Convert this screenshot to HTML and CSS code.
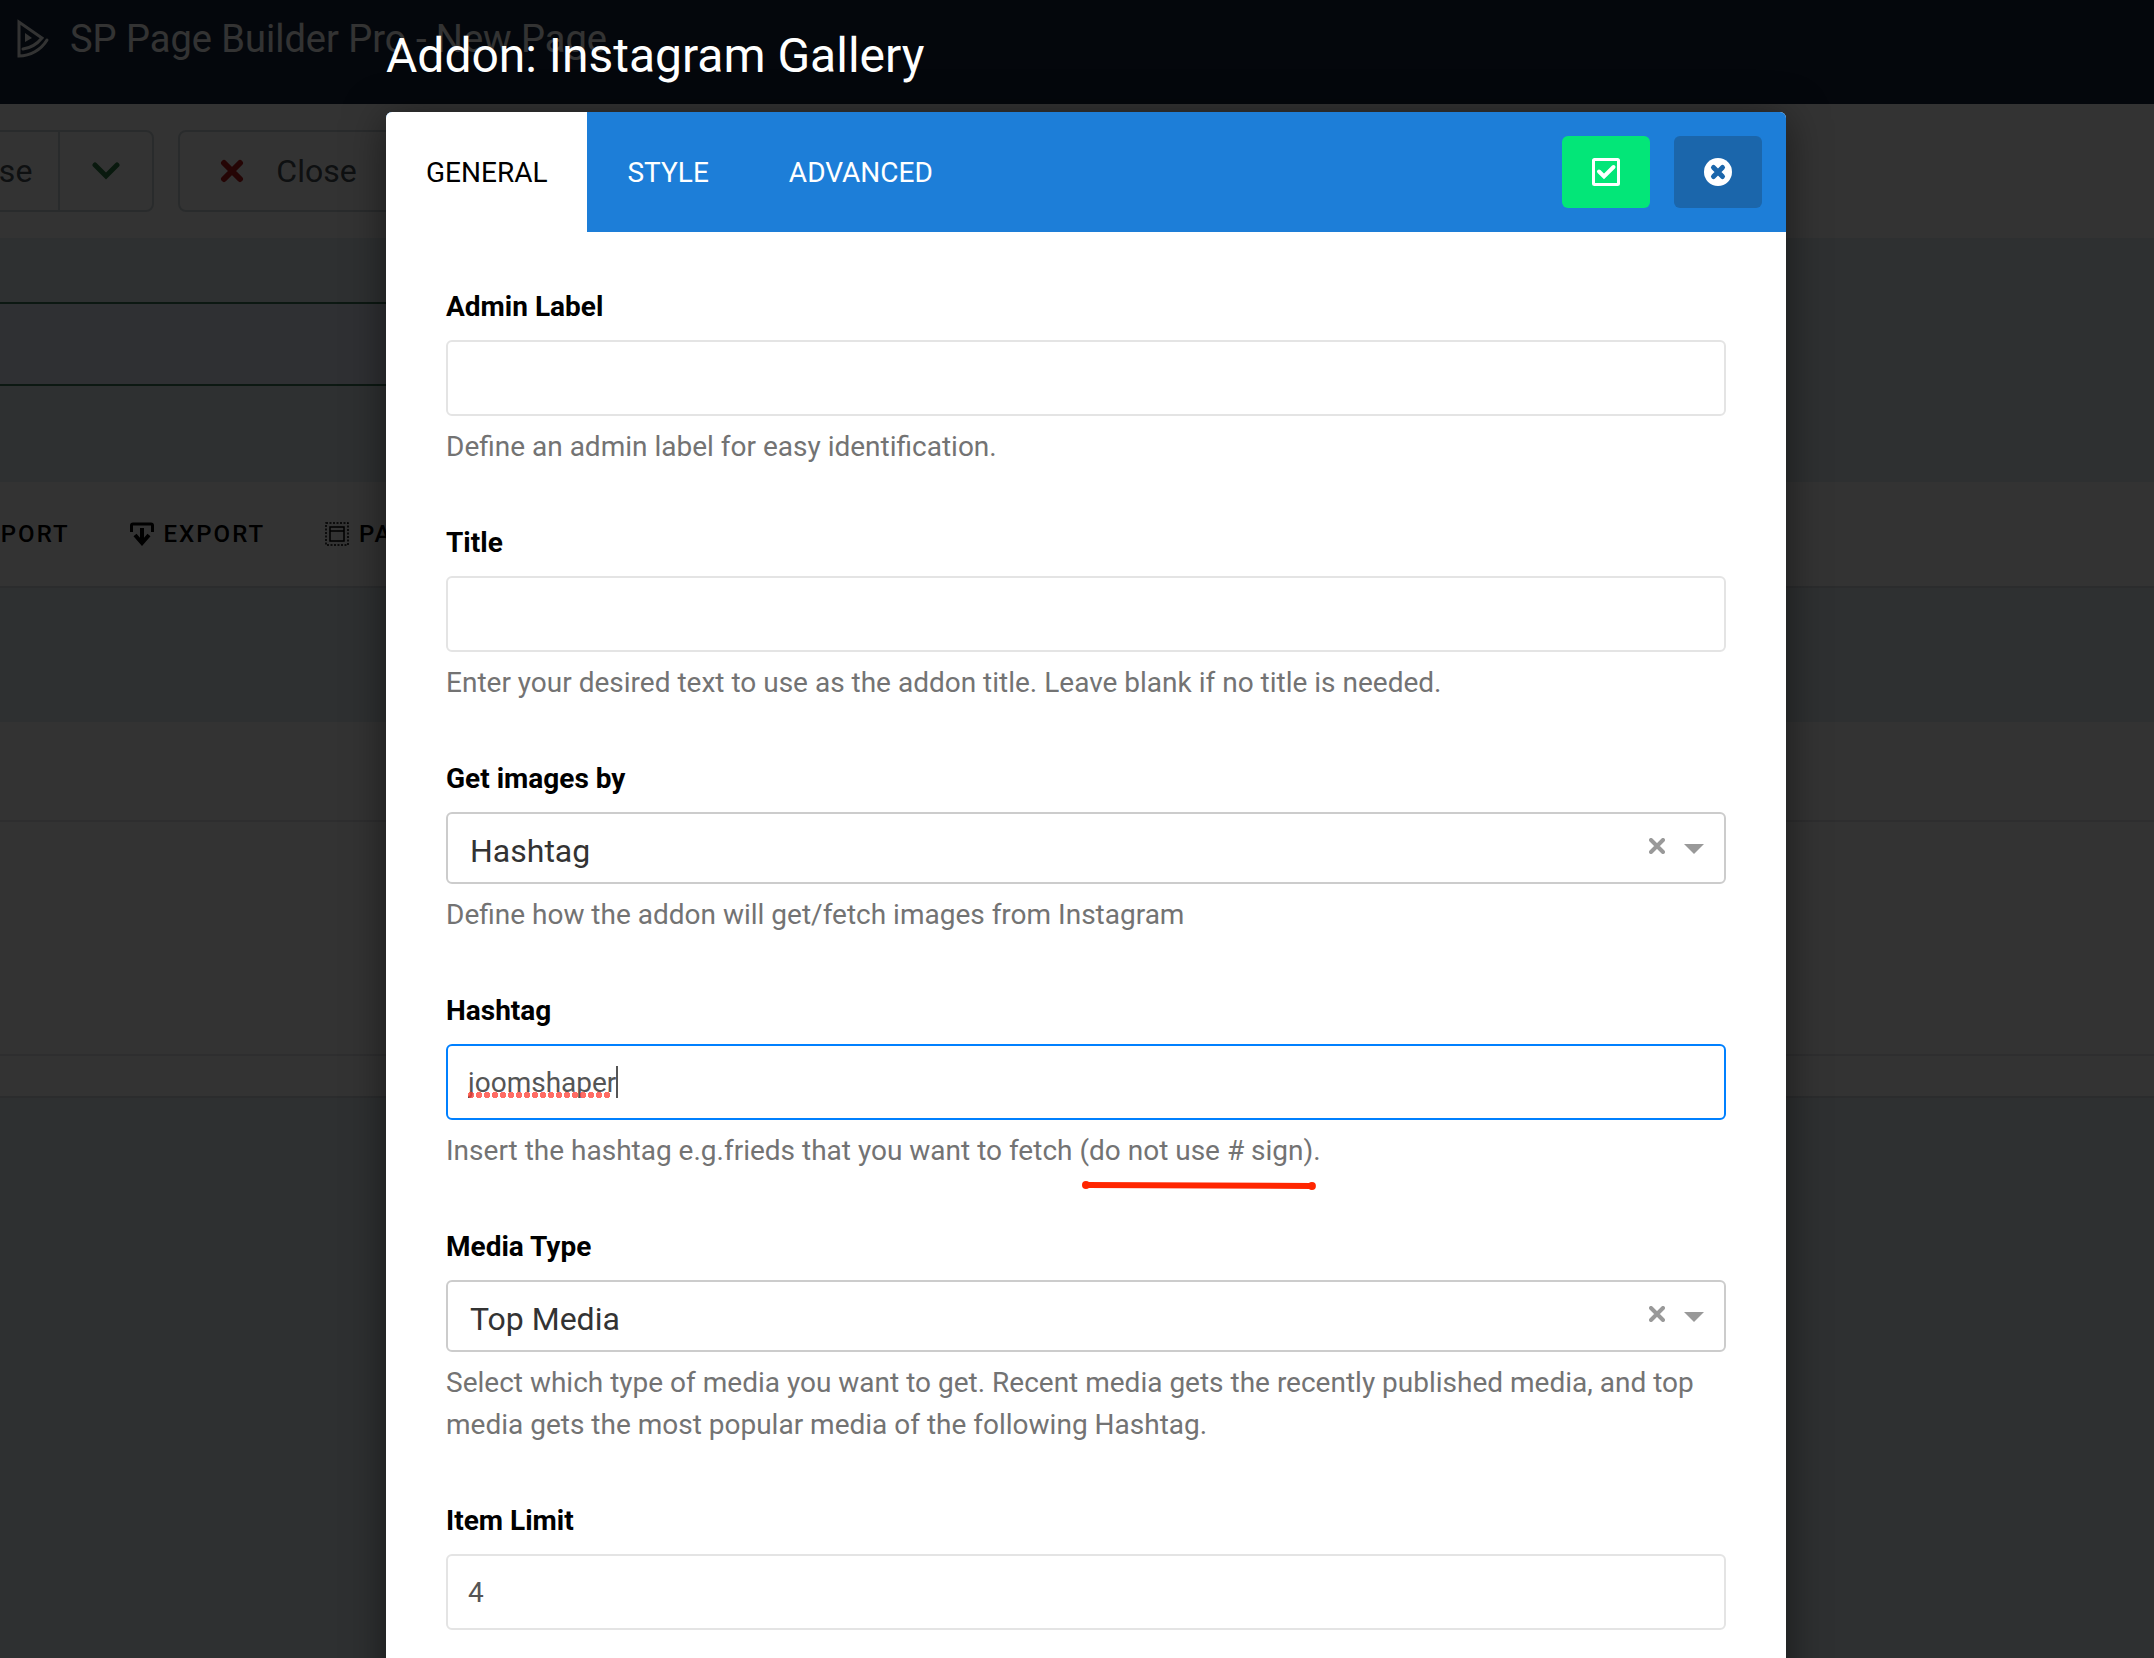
FILE: index.html
```html
<!DOCTYPE html>
<html lang="en">

<head>
    <meta charset="UTF-8">
    <meta name="viewport" content="width=device-width, initial-scale=1.0">
    <title>SP Page Builder Pro - New Page</title>
    <link rel="stylesheet" href="styles.css">
</head>

<body>
    <div class="page">
        <header class="topbar">
            <svg class="logo" viewBox="0 0 34 42" fill="none" stroke="#fff" stroke-width="3">
                <path d="M7 31c8-1 14-5 19-11L3 4v34c11 0 22-6 28-16" stroke-linecap="round" />
                <path d="M9 15v9l7-4z" fill="#fff" stroke="none" />
            </svg>
            <h1>SP Page Builder Pro - New Page</h1>
        </header>

        <div class="toolbar">
            <div class="btn-group">
                <button type="button" class="tool-btn">Close</button>
                <button type="button" class="tool-btn tool-arrow" aria-label="More save options">
                    <svg width="28" height="18" viewBox="0 0 28 18" fill="none" stroke="#2f7d45" stroke-width="5" stroke-linecap="round">
                        <path d="M3 3l11 11L25 3" />
                    </svg>
                </button>
            </div>
            <button type="button" class="tool-btn tool-close">
                <svg width="24" height="24" viewBox="0 0 24 24" stroke="#b81c1c" stroke-width="6" stroke-linecap="round">
                    <path d="M4 4l16 16M20 4L4 20" />
                </svg>
                Close
            </button>
        </div>

        <input type="text" class="page-title" aria-label="Page title">

        <nav class="builder-bar">
            <a href="#">IMPORT</a>
            <a href="#">
                <svg width="24" height="24" viewBox="0 0 24 24" fill="none" stroke="#000">
                    <path d="M1.500 10V3.500A1.500 1.500 0 0 1 3 2h18a1.500 1.500 0 0 1 1.500 1.500V10" stroke-width="3" />
                    <path d="M12 6v14M5 13l7 8 7-8" stroke-width="4" />
                </svg>
                EXPORT
            </a>
            <a href="#">
                <svg width="24" height="24" viewBox="0 0 24 24" fill="none" stroke="#000">
                    <rect x="1" y="1" width="22" height="22" stroke-width="1.500" stroke-dasharray="2 1.500" />
                    <rect x="5" y="5" width="14" height="14" stroke-width="1.500" />
                    <path d="M5 9h14" stroke-width="1.500" />
                </svg>
                PAGE
            </a>
        </nav>

        <div class="builder-row"></div>
        <div class="builder-canvas"></div>
        <div class="builder-footer"></div>
    </div>

    <div class="overlay">
        <div class="modal" role="dialog" aria-labelledby="modal-title">
            <h2 class="modal-title" id="modal-title">Addon: Instagram Gallery</h2>

            <div class="modal-box">
                <div class="tabs">
                    <button type="button" class="tab active">GENERAL</button>
                    <button type="button" class="tab">STYLE</button>
                    <button type="button" class="tab">ADVANCED</button>
                    <div class="actions">
                        <button type="button" class="action save" aria-label="Save">
                            <svg width="28" height="28" viewBox="0 0 28 28" fill="none" stroke="#fff">
                                <rect x="1.500" y="1.500" width="25" height="25" rx="1" stroke-width="3" />
                                <path d="M7 13.500l5 5L21.500 9" stroke-width="4" stroke-linecap="round" />
                            </svg>
                        </button>
                        <button type="button" class="action cancel" aria-label="Cancel">
                            <svg width="28" height="28" viewBox="0 0 28 28">
                                <circle cx="14" cy="14" r="14" fill="#fff" />
                                <path d="M9.500 9.500l9 9M18.500 9.500l-9 9" stroke="#1b66ab" stroke-width="5" stroke-linecap="round" />
                            </svg>
                        </button>
                    </div>
                </div>

                <form class="fields">
                    <div class="field">
                        <label for="admin-label">Admin Label</label>
                        <input type="text" id="admin-label">
                        <p>Define an admin label for easy identification.</p>
                    </div>

                    <div class="field">
                        <label for="title">Title</label>
                        <input type="text" id="title">
                        <p>Enter your desired text to use as the addon title. Leave blank if no title is needed.</p>
                    </div>

                    <div class="field">
                        <label for="get-by">Get images by</label>
                        <div class="control">
                            <select id="get-by">
                                <option>Hashtag</option>
                            </select>
                            <button type="button" class="clear" aria-label="Clear">
                                <svg width="16" height="16" viewBox="0 0 16 16"><path d="M2 2l12 12M14 2L2 14" /></svg>
                            </button>
                            <span class="caret"></span>
                        </div>
                        <p>Define how the addon will get/fetch images from Instagram</p>
                    </div>

                    <div class="field">
                        <label for="hashtag">Hashtag</label>
                        <div class="control">
                            <input type="text" id="hashtag" class="focused" value="joomshaper" spellcheck="false">
                            <span class="spelling"></span>
                            <span class="cursor"></span>
                        </div>
                        <p>Insert the hashtag e.g.frieds that you want to fetch <span class="marked">(do not use # sign)<svg viewBox="0 0 236 12" preserveAspectRatio="none"><path d="M4 5l228 1" /><circle cx="4" cy="5" r="4" /><circle cx="232" cy="6" r="4" /></svg></span>.</p>
                    </div>

                    <div class="field">
                        <label for="media-type">Media Type</label>
                        <div class="control">
                            <select id="media-type">
                                <option>Top Media</option>
                            </select>
                            <button type="button" class="clear" aria-label="Clear">
                                <svg width="16" height="16" viewBox="0 0 16 16"><path d="M2 2l12 12M14 2L2 14" /></svg>
                            </button>
                            <span class="caret"></span>
                        </div>
                        <p>Select which type of media you want to get. Recent media gets the recently published media, and top media gets the most popular media of the following Hashtag.</p>
                    </div>

                    <div class="field">
                        <label for="limit">Item Limit</label>
                        <input type="text" id="limit" value="4">
                    </div>
                </form>
            </div>
        </div>
    </div>
</body>

</html>
```

FILE: styles.css
```css
* {
    box-sizing: border-box;
}

body {
    margin: 0;
    height: 100vh;
    overflow: hidden;
    background: #e6f0f5;
    font-family: Roboto, "Liberation Sans", sans-serif;
    font-size: 28px;
    line-height: 42px;
}

button,
input,
select {
    font-family: inherit;
    font-size: inherit;
}

svg {
    flex: none;
}

/* Page behind the modal */
.topbar {
    display: flex;
    align-items: flex-start;
    gap: 20px;
    height: 104px;
    padding: 18px 16px;
    background: #15253c;
    color: #fff;
}

.topbar h1 {
    margin: 0;
    font-size: 38px;
    font-weight: 400;
}

.logo {
    width: 34px;
    height: 42px;
}

.toolbar {
    display: flex;
    gap: 24px;
    height: 134px;
    margin-left: -76px;
    padding: 26px 0;
    background: #fff;
}

.btn-group {
    display: flex;
}

.tool-btn {
    display: flex;
    align-items: center;
    height: 82px;
    padding: 0 26px;
    border: 2px solid #cdd5da;
    border-radius: 8px;
    background: #fff;
    color: #495057;
    font-size: 32px;
}

.btn-group .tool-btn:first-child {
    border-radius: 8px 0 0 8px;
}

.tool-arrow {
    margin-left: -2px;
    padding: 0 32px;
    border-radius: 0 8px 8px 0;
}

.tool-close {
    gap: 32px;
    padding: 0 40px;
}

.page-title {
    display: block;
    width: 50%;
    height: 84px;
    margin: 64px 0 96px;
    border: solid #3c7a5c;
    border-width: 2px 0;
    background: #e8f0fe;
}

.builder-bar {
    display: flex;
    align-items: center;
    gap: 60px;
    height: 106px;
    margin-left: -31px;
    border-bottom: 2px solid #d8dde0;
    background: #fff;
}

.builder-bar a {
    display: flex;
    align-items: center;
    gap: 10px;
    color: #000;
    font-size: 24px;
    font-weight: 500;
    letter-spacing: 2px;
    text-decoration: none;
}

.builder-row,
.builder-canvas,
.builder-footer {
    border-bottom: 2px solid #e3e6e8;
    background: #fff;
}

.builder-row {
    height: 100px;
    margin-top: 134px;
}

.builder-canvas {
    height: 234px;
}

.builder-footer {
    height: 42px;
    border-color: #d8dde0;
}

/* Modal */
.overlay {
    position: absolute;
    inset: 0;
    overflow: hidden;
    padding-left: 18px;
    background: rgba(0, 0, 0, 0.8);
}

.modal {
    max-width: 1400px;
    margin: 0 auto;
}

.modal-title {
    margin: 0;
    height: 112px;
    color: #fff;
    font-size: 48px;
    font-weight: 400;
    line-height: 112px;
}

.modal-box {
    min-height: 100vh;
    border-radius: 6px;
    background: #fff;
    box-shadow: 0 6px 40px rgba(0, 0, 0, 0.5);
}

.tabs {
    display: flex;
    height: 120px;
    border-radius: 6px 6px 0 0;
    overflow: hidden;
    background: #1d7ed8;
}

.tab {
    padding: 0 40px;
    border: 0;
    background: none;
    color: #fff;
}

.tab.active {
    background: #fff;
    color: #000;
}

.actions {
    display: flex;
    align-items: center;
    gap: 24px;
    margin-left: auto;
    padding-right: 24px;
}

.action {
    display: flex;
    align-items: center;
    justify-content: center;
    width: 88px;
    height: 72px;
    padding: 0;
    border: 0;
    border-radius: 6px;
}

.save {
    background: #03e678;
}

.cancel {
    background: #1b66ab;
}

.fields {
    padding: 54px 60px 60px;
}

.field {
    margin-bottom: 54px;
}

.field label {
    display: block;
    margin-bottom: 12px;
    color: #000;
    font-weight: 700;
}

.field input,
.field select {
    display: block;
    width: 100%;
    border: 2px solid #e4e4e4;
    border-radius: 6px;
    background: #fff;
}

.field input {
    height: 76px;
    padding: 0 20px;
    color: #555;
}

.field input.focused {
    border-color: #0080ff;
}

.field select {
    height: 72px;
    padding: 6px 22px 0;
    border-color: #ccc;
    appearance: none;
    color: #333;
    font-size: 32px;
}

.field p {
    margin: 10px 0 0;
    color: #737373;
}

.control {
    position: relative;
}

.clear {
    position: absolute;
    top: 26px;
    right: 61px;
    display: flex;
    padding: 0;
    border: 0;
    background: none;
}

.clear path {
    stroke: #999;
    stroke-width: 4px;
    stroke-linecap: round;
}

.caret {
    position: absolute;
    top: 32px;
    right: 22px;
    border: solid transparent;
    border-width: 10px 10px 0;
    border-top-color: #999;
}

/* Dotted spelling mark and text cursor in the active input */
.spelling {
    position: absolute;
    left: 22px;
    bottom: 22px;
    width: 144px;
    height: 6px;
    background: radial-gradient(circle at 3px 3px, rgba(255, 59, 48, 0.75) 3px, transparent 3px) 0 0 / 8px 6px;
}

.cursor {
    position: absolute;
    top: 22px;
    left: 170px;
    width: 2px;
    height: 32px;
    background: #555;
}

.marked {
    position: relative;
}

.marked svg {
    position: absolute;
    left: 3px;
    top: 46px;
    width: 100%;
    height: 12px;
}

.marked path {
    stroke: #ff2600;
    stroke-width: 6px;
}

.marked circle {
    fill: #ff2600;
}
```
